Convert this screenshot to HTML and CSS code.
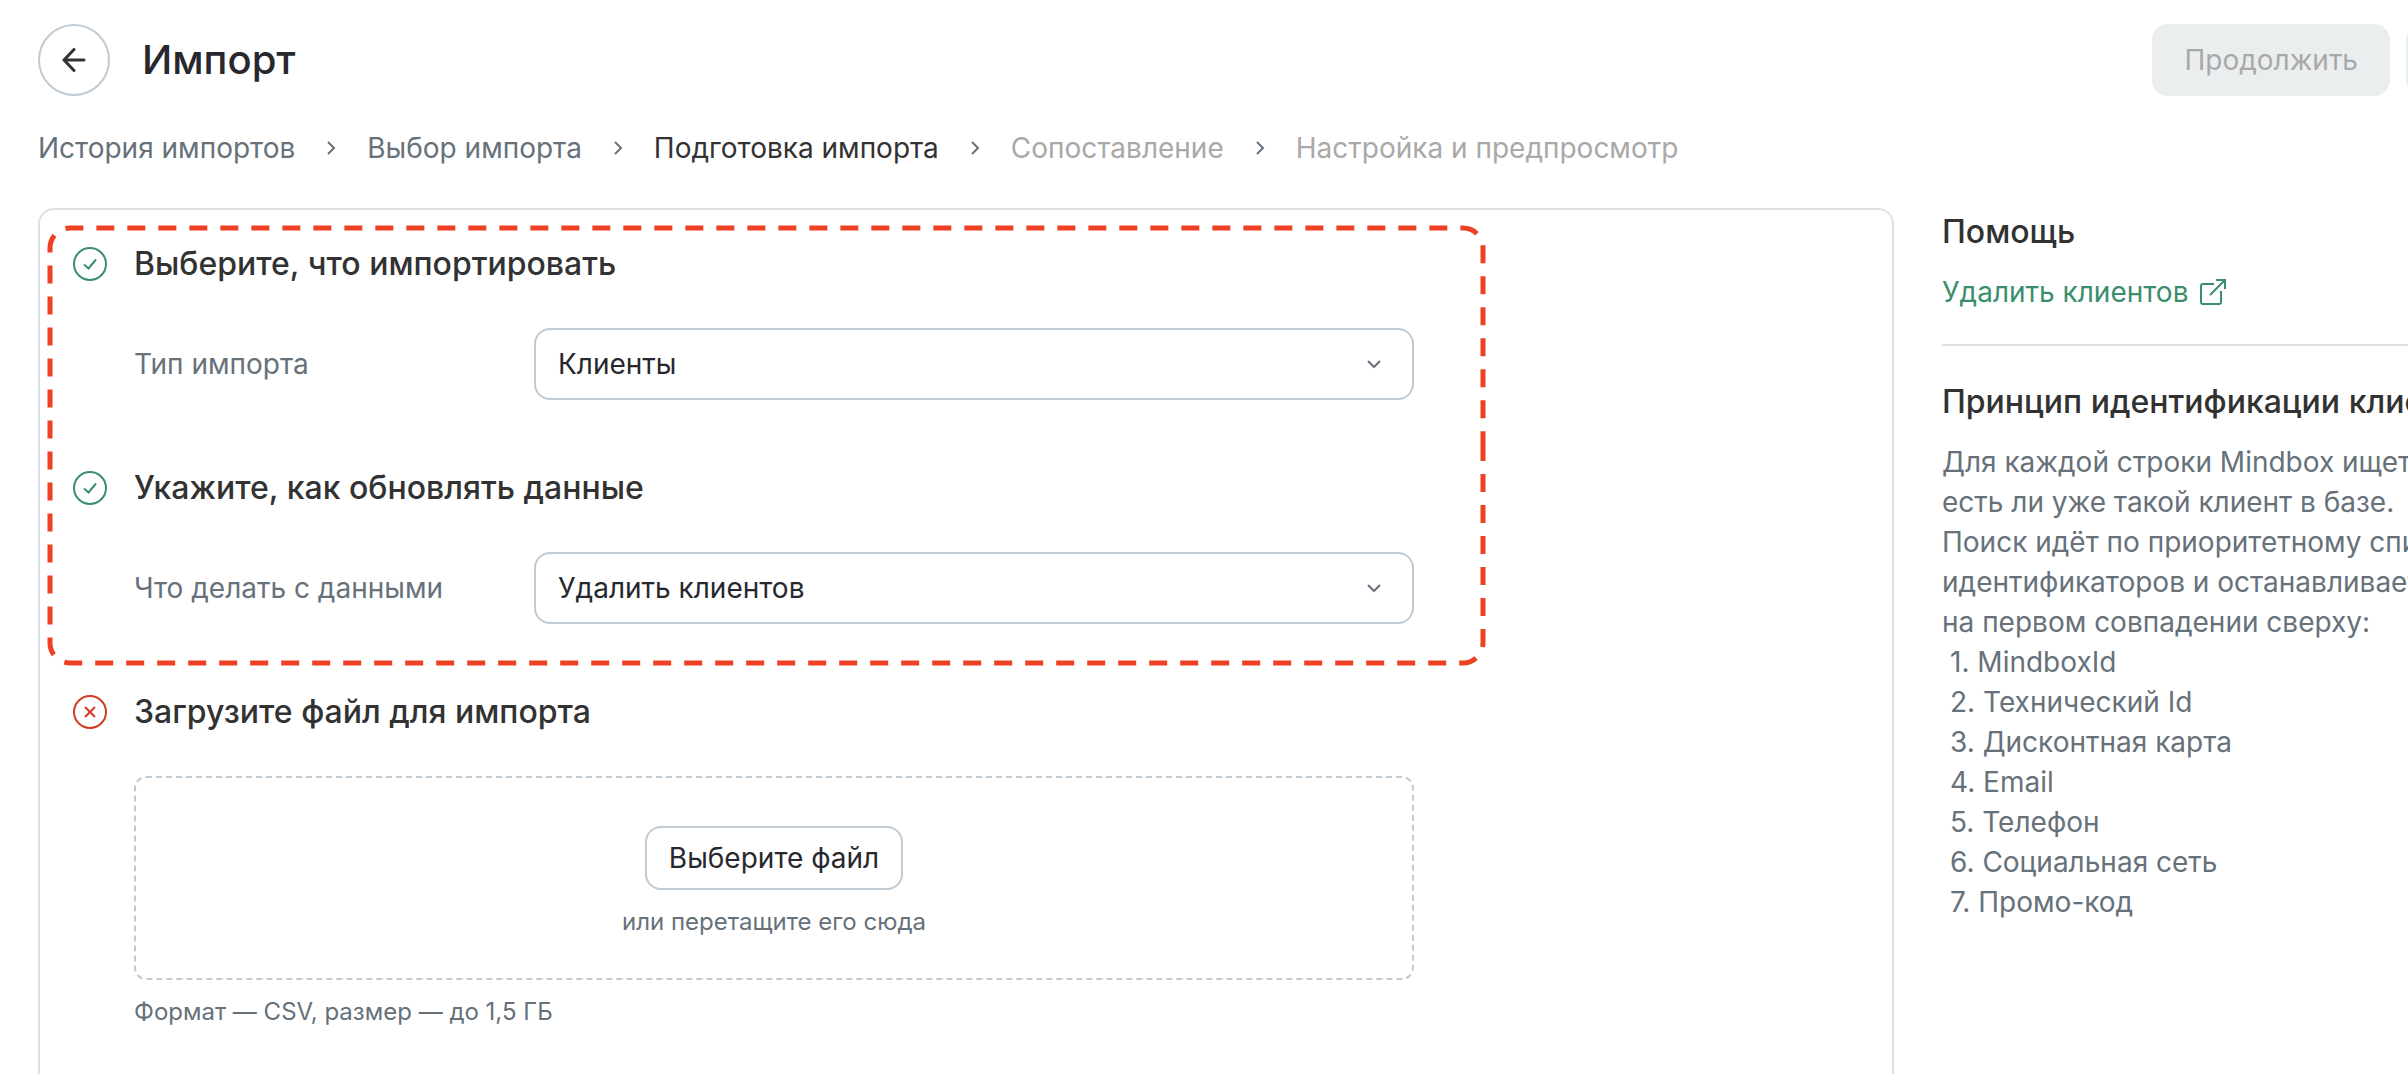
FILE: index.html
```html
<!DOCTYPE html>
<html lang="ru">
<head>
  <meta charset="UTF-8" />
  <meta name="viewport" content="width=device-width, initial-scale=1.0"/>
  <title>Импорт</title>
  <link rel="stylesheet" href="styles.css">
</head>
<body>
  <div class="page">
    <!-- Header -->
    <header class="header">
      <button type="button" class="back-btn" aria-label="Назад">
        <svg width="24" height="24" viewBox="0 0 24 24"><path d="M22 12H2M12 1.500L2 12l10 10.500"/></svg>
      </button>
      <h1>Импорт</h1>
      <div class="header-actions">
        <button type="button" class="action-btn" disabled>Продолжить</button>
        <button type="button" class="action-btn more-btn" aria-label="Ещё" disabled></button>
      </div>
    </header>

    <!-- Steps -->
    <nav class="breadcrumbs">
      <a href="#">История импортов</a>
      <svg class="separator" width="24" height="24" viewBox="0 0 24 24"><path d="M9 6l6 6-6 6"/></svg>
      <a href="#">Выбор импорта</a>
      <svg class="separator" width="24" height="24" viewBox="0 0 24 24"><path d="M9 6l6 6-6 6"/></svg>
      <span class="current">Подготовка импорта</span>
      <svg class="separator" width="24" height="24" viewBox="0 0 24 24"><path d="M9 6l6 6-6 6"/></svg>
      <span class="next">Сопоставление</span>
      <svg class="separator" width="24" height="24" viewBox="0 0 24 24"><path d="M9 6l6 6-6 6"/></svg>
      <span class="next">Настройка и предпросмотр</span>
    </nav>

    <div class="content">
      <main class="card">
        <section class="step">
          <div class="step-title">
            <svg class="status done" width="36" height="36" viewBox="0 0 36 36"><circle cx="18" cy="18" r="16"/><path d="M12 18.500l4.500 4L24 13.500"/></svg>
            <h2>Выберите, что импортировать</h2>
          </div>
          <div class="field">
            <label for="import-type">Тип импорта</label>
            <div class="select-box">
              <select id="import-type">
                <option>Клиенты</option>
              </select>
              <svg class="chevron" width="16" height="16" viewBox="0 0 16 16"><path d="M2 5l6 6 6-6"/></svg>
            </div>
          </div>
        </section>

        <section class="step">
          <div class="step-title">
            <svg class="status done" width="36" height="36" viewBox="0 0 36 36"><circle cx="18" cy="18" r="16"/><path d="M12 18.500l4.500 4L24 13.500"/></svg>
            <h2>Укажите, как обновлять данные</h2>
          </div>
          <div class="field">
            <label for="import-action">Что делать с данными</label>
            <div class="select-box">
              <select id="import-action">
                <option>Удалить клиентов</option>
              </select>
              <svg class="chevron" width="16" height="16" viewBox="0 0 16 16"><path d="M2 5l6 6 6-6"/></svg>
            </div>
          </div>
        </section>

        <section class="step">
          <div class="step-title">
            <svg class="status error" width="36" height="36" viewBox="0 0 36 36"><circle cx="18" cy="18" r="16"/><path d="M13 13l10 10M23 13L13 23"/></svg>
            <h2>Загрузите файл для импорта</h2>
          </div>
          <div class="upload">
            <div class="drop-area">
              <button type="button" class="file-btn">Выберите файл</button>
              <p>или перетащите его сюда</p>
            </div>
            <p class="file-hint">Формат — CSV, размер — до 1,5 ГБ</p>
          </div>
        </section>

        <!-- Dashed frame over the first two steps -->
        <svg class="highlight" width="1440" height="442" viewBox="0 0 1440 442">
          <path d="M1437 218V418a20 20 0 0 1-20 20H24a20 20 0 0 1-20-20V23a20 20 0 0 1 20-20H1417a20 20 0 0 1 20 20V218"/>
        </svg>
      </main>

      <aside class="help">
        <h2>Помощь</h2>
        <a href="#" class="help-link">
          Удалить клиентов
          <svg width="26" height="26" viewBox="0 0 26 26"><path d="M14 5H3a2 2 0 0 0-2 2v16a2 2 0 0 0 2 2h16a2 2 0 0 0 2-2V12M10 16L25 1M16 1h9v9"/></svg>
        </a>
        <hr>
        <h2>Принцип идентификации клиентов</h2>
        <p>
          Для каждой строки Mindbox ищет,<br>
          есть ли уже такой клиент в базе.<br>
          Поиск идёт по приоритетному списку<br>
          идентификаторов и останавливается<br>
          на первом совпадении сверху:
        </p>
        <ol>
          <li>MindboxId</li>
          <li>Технический Id</li>
          <li>Дисконтная карта</li>
          <li>Email</li>
          <li>Телефон</li>
          <li>Социальная сеть</li>
          <li>Промо-код</li>
        </ol>
      </aside>
    </div>
  </div>
</body>
</html>
```

FILE: styles.css
```css
* {
  margin: 0;
  padding: 0;
  box-sizing: border-box;
  font-family: Inter, 'Noto Sans', sans-serif;
}

html {
  overflow: hidden;
}

body {
  background-color: #fff;
  color: #66717a;
  font-size: 28px;
  line-height: 40px;
  height: 100vh;
  overflow: hidden;
}

svg {
  flex: none;
  fill: none;
  stroke: currentColor;
  stroke-width: 2;
}

a {
  color: inherit;
  text-decoration: none;
}

button,
select {
  font-size: 28px;
  line-height: 40px;
  cursor: pointer;
}

h2 {
  font-size: 32px;
  line-height: 40px;
  font-weight: 500;
  color: #323232;
}

/* the page runs a little past the right edge of the window */
.page {
  width: calc(100% + 132px);
  padding: 24px 38px 0;
}

.header {
  display: flex;
  align-items: center;
  gap: 32px;
}

.header h1 {
  font-size: 40px;
  line-height: 48px;
  font-weight: 500;
  color: #27282e;
}

.back-btn {
  display: flex;
  align-items: center;
  justify-content: center;
  width: 72px;
  height: 72px;
  border: 2px solid #c0cbd3;
  border-radius: 50%;
  background-color: #fff;
  color: #323232;
}

.back-btn svg {
  stroke-width: 3;
  stroke-linecap: round;
  stroke-linejoin: round;
}

.header-actions {
  display: flex;
  gap: 16px;
  margin-left: auto;
}

.action-btn {
  height: 72px;
  padding: 0 32px;
  border: none;
  border-radius: 16px;
  background-color: #ebeeef;
  color: #a9a9a9;
}

.more-btn {
  width: 96px;
}

.breadcrumbs {
  display: flex;
  align-items: center;
  gap: 24px;
  margin-top: 32px;
}

.separator {
  color: #66717a;
}

.current {
  color: #323232;
}

.next {
  color: #a9a9a9;
}

.content {
  display: flex;
  gap: 48px;
  margin-top: 40px;
}

.card {
  position: relative;
  flex: 1;
  padding: 34px 32px 120px;
  border: 2px solid #dce1e6;
  border-radius: 16px;
}

.step {
  margin-bottom: 68px;
}

.step-title {
  display: flex;
  align-items: center;
  gap: 26px;
  margin-bottom: 44px;
}

.done {
  color: #3a8e6c;
}

.error {
  color: #d03c20;
}

.field {
  display: flex;
  align-items: center;
  padding-left: 62px;
}

.field label {
  width: 400px;
}

.select-box {
  position: relative;
  width: 880px;
}

.select-box select {
  display: block;
  width: 100%;
  height: 72px;
  padding: 0 60px 0 22px;
  border: 2px solid #c0cbd3;
  border-radius: 16px;
  background-color: #fff;
  color: #27282e;
  appearance: none;
}

.chevron {
  position: absolute;
  top: 28px;
  right: 32px;
  pointer-events: none;
}

.upload {
  width: 1342px;
  padding-left: 62px;
}

.drop-area {
  display: flex;
  flex-direction: column;
  align-items: center;
  gap: 16px;
  padding: 48px 0 40px;
  border: 2px dashed #c0cbd3;
  border-radius: 12px;
}

.drop-area p,
.file-hint {
  font-size: 24px;
  line-height: 32px;
}

.file-hint {
  margin-top: 16px;
}

.file-btn {
  height: 64px;
  padding: 0 22px;
  border: 2px solid #c0cbd3;
  border-radius: 16px;
  background-color: #fff;
  color: #27282e;
}

.highlight {
  position: absolute;
  top: 15px;
  left: 6px;
  color: #ee4023;
  stroke-width: 5;
  stroke-dasharray: 18 13;
  pointer-events: none;
}

.help {
  width: 560px;
  padding-top: 4px;
}

.help-link {
  display: flex;
  align-items: center;
  gap: 12px;
  margin-top: 20px;
  color: #3a8e6c;
}

.help hr {
  margin: 32px 0 36px;
  border: none;
  border-top: 2px solid #dce1e6;
}

.help p {
  margin-top: 20px;
}

.help ol {
  padding-left: 8px;
  list-style: none;
  counter-reset: item;
}

.help li::before {
  counter-increment: item;
  content: counter(item) ". ";
}
```
